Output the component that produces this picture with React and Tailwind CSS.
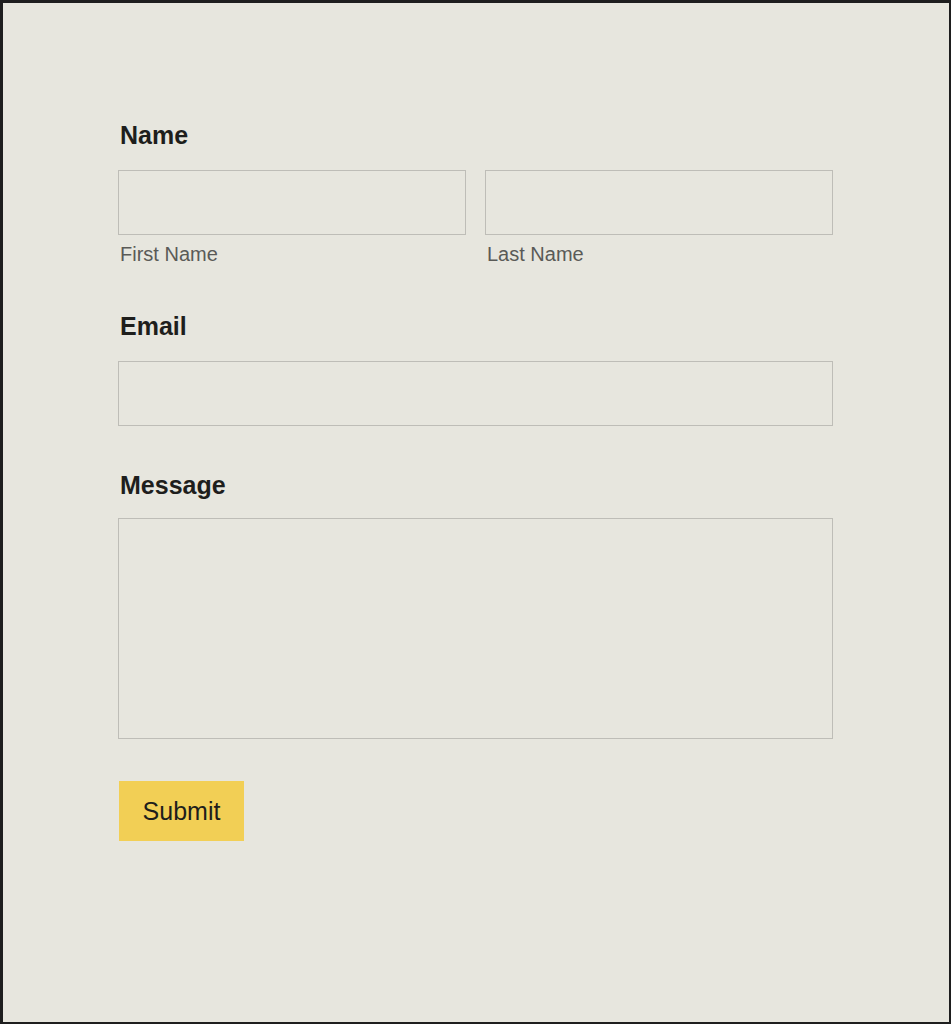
export default function App() {
  const font = { fontFamily: '"Liberation Sans", Arial, sans-serif' };
  const label = "block pl-[2px] text-[25px] font-bold leading-[30px] text-[#1e1e1c]";
  const input = "block w-full border border-[#bebdb7] bg-transparent outline-none";
  const sub = "mt-[7px] pl-[2px] text-[20px] leading-[24px] text-[#5a5a57]";
  return (
    <div
      style={font}
      className="w-[951px] h-[1024px] border-t-[3px] border-l-[3px] border-r-2 border-b-2 border-[#1e1e1e] bg-[#e7e6de] pl-[115px] pt-[117px]"
    >
      <form className="w-[715px]" onSubmit={(e) => e.preventDefault()}>
        <div>
          <label className={label}>Name</label>
          <div className="mt-[20px] flex gap-[19px]">
            <div className="flex-1">
              <input className={`${input} h-[65px]`} />
              <div className={sub}>First Name</div>
            </div>
            <div className="flex-1">
              <input className={`${input} h-[65px]`} />
              <div className={sub}>Last Name</div>
            </div>
          </div>
        </div>

        <div className="mt-[45px]">
          <label className={label}>Email</label>
          <input className={`${input} mt-[20px] h-[65px]`} />
        </div>

        <div className="mt-[44px]">
          <label className={label}>Message</label>
          <textarea className={`${input} mt-[18px] h-[221px] resize-none`} />
        </div>

        <button
          type="submit"
          className="mt-[42px] ml-px flex h-[60px] w-[125px] items-center justify-center bg-[#f2cf55] text-[25px] leading-[30px] text-[#1e1e1c]"
        >
          Submit
        </button>
      </form>
    </div>
  );
}
